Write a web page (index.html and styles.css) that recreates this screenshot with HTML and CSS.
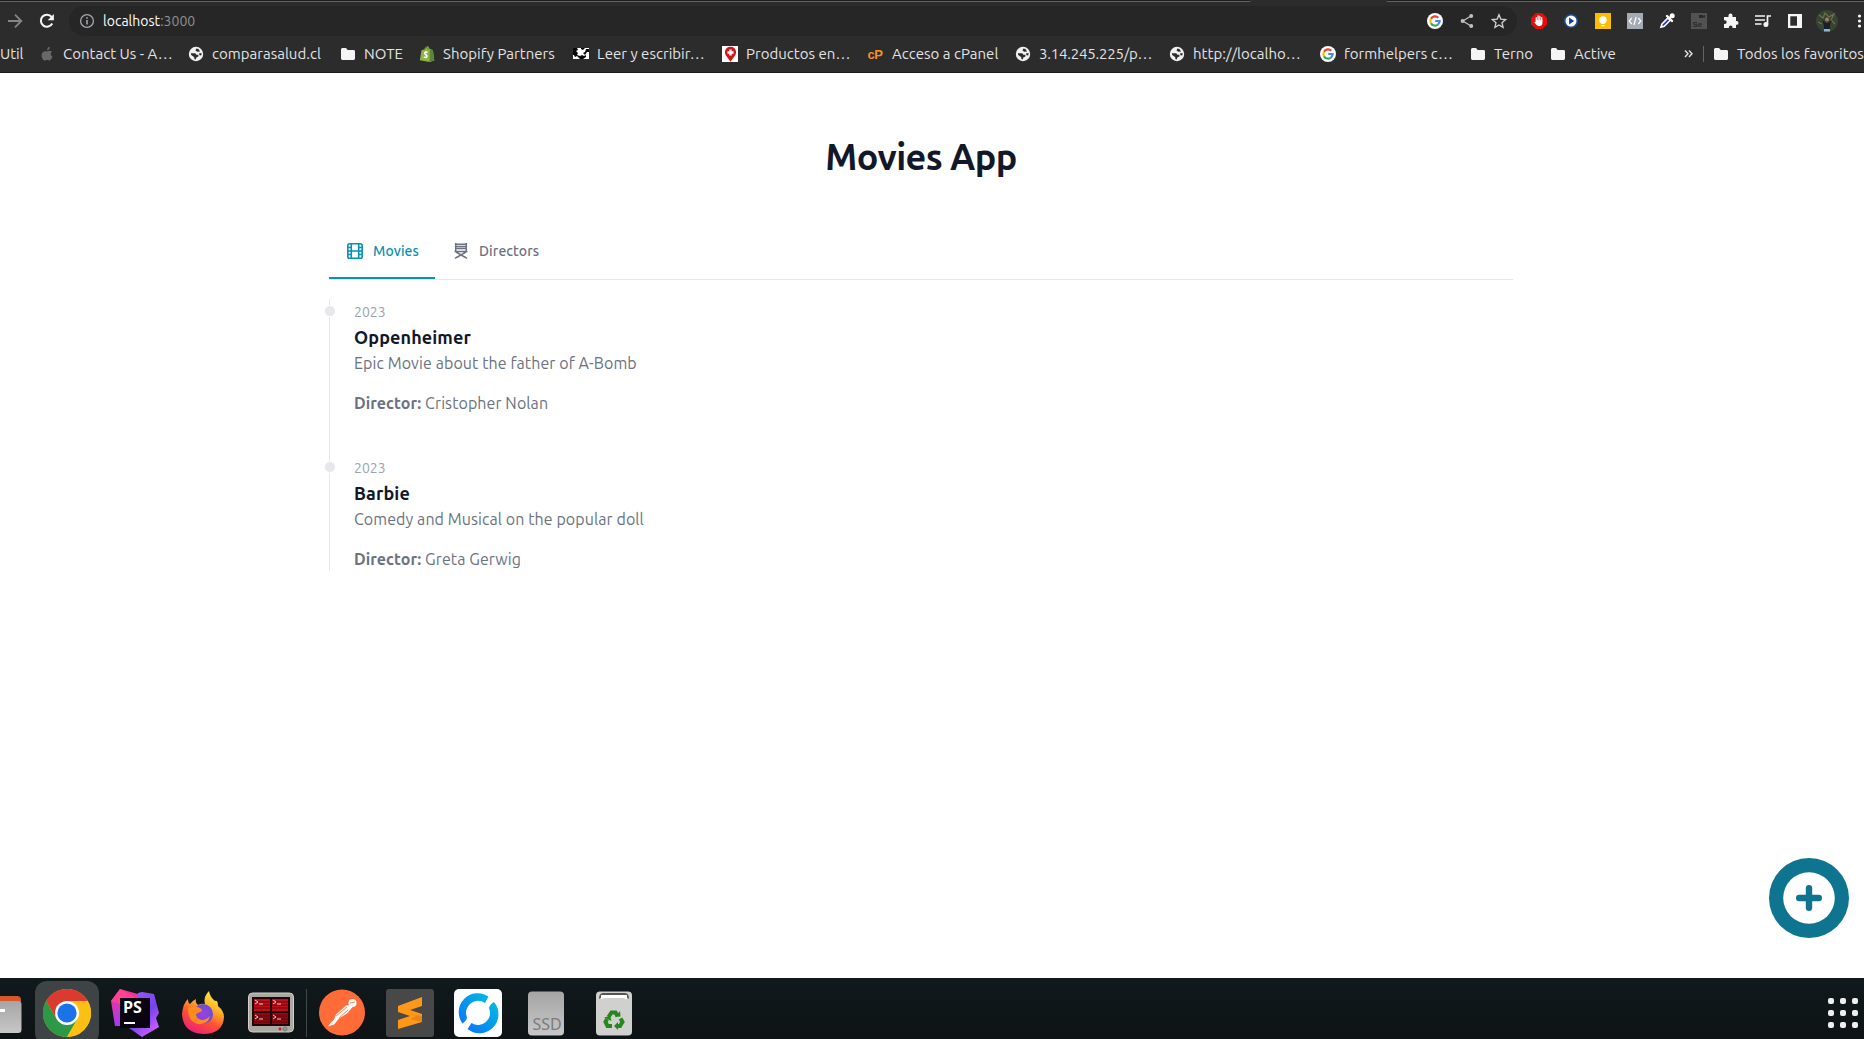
FILE: index.html
```html
<!DOCTYPE html>
<html lang="es">
<head>
<meta charset="utf-8">
<title>Movies App</title>
<link rel="stylesheet" href="styles.css">
</head>
<body>
<svg class="defs" aria-hidden="true">
  <defs>
    <symbol id="folder" viewBox="0 0 16 16"><path d="M1 3.500Q1 2 2.400 2H6l1.700 2h5.800Q15 4 15 5.400v7.200q0 1.400-1.400 1.400H2.400Q1 14 1 12.600z" fill="#f5f5f5"/></symbol>
    <symbol id="globe" viewBox="0 0 16 16"><circle cx="8" cy="8" r="7.200" fill="#f1f1f1"/><path d="M2.800 7.300h4.400l1.200 1.500h2v1.800l-2.100.9-.5 2-1.500-.4v-1.800L3.200 9zM8.400 2.600l-.9 1.900 1.700 1.300 2.900-.3-1.700-2.600zM10.800 7.500l2.800-.5-.2 2.300-1.600.2z" fill="#2c2c2c"/></symbol>
    <symbol id="google" viewBox="0 0 16 16"><circle cx="8" cy="8" r="8" fill="#fff"/><g fill="none" stroke-width="2.200"><path d="M11.300 4.700A4.600 4.600 0 0 0 4 5.800" stroke="#ea4335"/><path d="M4 5.800a4.600 4.600 0 0 0 0 4.400" stroke="#fbbc05"/><path d="M4 10.200a4.600 4.600 0 0 0 7 1.300" stroke="#34a853"/><path d="M11 11.500A4.600 4.600 0 0 0 12.600 8H8.200" stroke="#4285f4"/></g></symbol>
  </defs>
</svg>

<header class="browser">
  <div class="tabstrip"><i class="edge edge-left"></i><i class="edge edge-right"></i></div>
  <div class="toolbar">
    <span class="slot"><svg width="16" height="16" viewBox="0 0 16 16" fill="none" stroke="#858585" stroke-width="1.800"><path d="M1 8h13M8 1.600 14.300 8 8 14.400"/></svg></span>
    <span class="slot"><svg width="16" height="16" viewBox="0 0 16 16"><path d="M13.200 10.500A6 6 0 1 1 12.600 4" fill="none" stroke="#f5f5f5" stroke-width="2.100"/><path d="M14.900 1v6.200H8.700z" fill="#f5f5f5"/></svg></span>
    <div class="omnibox">
      <svg width="16" height="16" viewBox="0 0 16 16"><circle cx="8" cy="8" r="6.400" fill="none" stroke="#a5a7aa" stroke-width="1.300"/><path d="M8 7v4.500M8 4.200v1.500" stroke="#a5a7aa" stroke-width="1.600"/></svg>
      <span class="url">localhost<span class="port">:3000</span></span>
      <span class="slot push"><svg width="16" height="16"><use href="#google"/></svg></span>
      <span class="slot"><svg width="16" height="16" viewBox="0 0 16 16"><path d="M12 3 3.800 8l8.200 5" fill="none" stroke="#bfbfbf" stroke-width="1.300"/><g fill="#bfbfbf"><circle cx="12.200" cy="3" r="2"/><circle cx="3.600" cy="8" r="2"/><circle cx="12.200" cy="13" r="2"/></g></svg></span>
      <span class="slot"><svg width="16" height="16" viewBox="0 0 16 16"><path d="m8 1.700 1.800 4.400 4.800.4-3.600 3.200 1.100 4.600L8 11.900l-4.100 2.400L5 9.700 1.400 6.500l4.800-.4z" fill="none" stroke="#d0d0d0" stroke-width="1.300"/></svg></span>
    </div>
    <span class="slot"><svg width="16" height="16" viewBox="0 0 16 16"><path d="M4.700 0h6.600L16 4.700v6.600L11.300 16H4.700L0 11.300V4.700z" fill="#e40d0d"/><path d="M5.300 8V4.600M7.100 7.500V3M8.900 7.500V3.300M10.700 8V4.600" stroke="#fff" stroke-width="1.300" stroke-linecap="round"/><path d="M4.700 7.200h6.700V10q-.3 3.300-3.300 3.300Q6 13.300 3.300 9.300q.4-1 1.400-.2z" fill="#fff"/></svg></span>
    <span class="slot"><svg width="16" height="16" viewBox="0 0 16 16"><circle cx="8" cy="8" r="6.300" fill="#fff" stroke="#174e96" stroke-width="1.600"/><path d="m6.100 4.500 5 3.500-5 3.500z" fill="#123f80"/></svg></span>
    <span class="slot"><svg width="16" height="16" viewBox="0 0 16 16"><path d="M0 0h16v16H0z" fill="#fbbc04"/><circle cx="8" cy="7" r="3.700" fill="#fff"/><path d="M6.200 9h3.600v2H6.200zM6.200 12h3.600v1.200H6.200z" fill="#fff"/></svg></span>
    <span class="slot"><svg width="16" height="16" viewBox="0 0 16 16"><path d="M0 0h16v16H0z" fill="#a4abb5"/><path d="M4.700 5 2.200 8l2.500 3M11.300 5l2.500 3-2.500 3M9.200 4 6.900 12" fill="none" stroke="#fff" stroke-width="1.200"/></svg></span>
    <span class="slot"><svg width="16" height="16" viewBox="0 0 16 16"><path d="m2 14 1-3 6-6 2.200 2.200-6 6z" fill="#1d2fd0" stroke="#fff" stroke-width="1.600"/><path d="m8 3 5 5M10.300 5.500l3-3" stroke="#fff" stroke-width="2.400" stroke-linecap="round"/><circle cx="13.200" cy="2.800" r="2.500" fill="#fff"/></svg></span>
    <span class="slot"><svg width="16" height="16" viewBox="0 0 16 16"><path d="M0 0h16v16H0z" fill="#525252"/><path d="M8 2h4v1l2-1v3l-2-1v1H8z" fill="#292929"/><text x="1.400" y="13.500" class="se">Se</text></svg></span>
    <span class="slot"><svg width="16" height="16" viewBox="0 0 16 16"><path d="M1 4h4.500V2.500a2 2 0 0 1 4 0V4H13v4h.6a1.900 1.900 0 0 1 0 3.800H13V15H9.500v-.7a1.800 1.800 0 0 0-3.600 0v.7H1v-4h.8a1.900 1.900 0 0 0 0-3.800H1z" fill="#f5f5f5"/></svg></span>
    <span class="slot"><svg width="16" height="16" viewBox="0 0 16 16"><path d="M0 3h10M0 7h10M0 11h6.500M12.500 11V3H16" fill="none" stroke="#f5f5f5" stroke-width="1.700"/><circle cx="10.900" cy="11.400" r="2.500" fill="#f5f5f5"/></svg></span>
    <span class="slot"><svg width="16" height="16" viewBox="0 0 16 16"><path d="M1 1h14v14H1z" fill="#f5f5f5"/><path d="M3.300 3.300H10v9.400H3.300z" fill="#2c2c2c"/></svg></span>
    <span class="slot"><svg width="22" height="22" viewBox="0 0 22 22"><circle cx="11" cy="11" r="11" fill="#37442f"/><path d="m3 5 4 3 2-5 4 4 5-3-3 6 4 4M2 12l4 2" fill="none" stroke="#697253" stroke-width="1.200"/><circle cx="11" cy="9.500" r="2" fill="#a27c60"/><path d="m6 10 4 3h2l4-3-2 5v4H8v-4z" fill="#18202a"/><path d="M8 19h6v2.500H8z" fill="#8bb6d2"/></svg></span>
    <span class="slot"><svg width="16" height="16" viewBox="0 0 16 16" fill="#f5f5f5"><circle cx="8.500" cy="3" r="1.600"/><circle cx="8.500" cy="8" r="1.600"/><circle cx="8.500" cy="13" r="1.600"/></svg></span>
  </div>
  <nav class="bookmarks">
    <span class="bm"><span class="label util">Util</span></span>
    <span class="bm"><svg width="16" height="16" viewBox="0 0 16 16"><path d="M8.100 4.400C8 2.400 9.300 1 10.900.8c.1 2-1.100 3.400-2.800 3.600zM13 5.700q-2.900 2.200.5 5.100-1.200 3.600-2.900 3.700c-1 0-1.400-.6-2.500-.6s-1.600.6-2.500.6C3.900 14.500 2.400 11.300 2.600 9c.2-3.100 2.700-4.600 5.500-3.500 1.900-.9 3.600-.9 4.900.2z" fill="#686868"/></svg><span class="label">Contact Us - A…</span></span>
    <span class="bm"><svg width="16" height="16"><use href="#globe"/></svg><span class="label">comparasalud.cl</span></span>
    <span class="bm"><svg width="16" height="16"><use href="#folder"/></svg><span class="label">NOTE</span></span>
    <span class="bm"><svg width="16" height="16" viewBox="0 0 16 16"><path d="m2.500 4.300 3-1Q6.300.7 8.300.3q1.500-.2 2 2.200l1.600.8 2 1 1.400 10.200L10.500 16 .8 14.300z" fill="#8db543"/><path d="m10.800 3 3.100 1.300 1.400 10.200-4.800 1.500z" fill="#5a8737"/><path d="M5 4.200Q6.400 1.100 8 1.300q1 .2 1 2.500" fill="none" stroke="#5a8737"/><path d="M8.600 6.300Q5.900 5.500 5.800 7.200q0 1 1.300 1.700 1.300.9.400 2.200-1 .9-2.700-.2" fill="none" stroke="#fff" stroke-width="1.700"/></svg><span class="label">Shopify Partners</span></span>
    <span class="bm"><svg width="16" height="16" viewBox="0 0 16 16"><path d="M0 2h16v11H0z" fill="#fff"/><path d="M0 2h4l1 2-2 1 2 2-1 2 3 1 2-1 2 1 2-1v2l-3 2H7L4 10 2 11 1 9H0zM8 2h4l-2 2-2-1zM13 3h3v3h-2l-2 3-2-2 2-1z" fill="#080808"/></svg><span class="label">Leer y escribir…</span></span>
    <span class="bm"><svg width="16" height="16" viewBox="0 0 16 16"><path d="M0 0h16v16H0z" fill="#fff"/><path d="M8.500 15.800 4 9.600a5.600 5.600 0 1 1 9 0z" fill="#d41219"/><path d="M8.500 3.500v6M5.500 6.500h6" stroke="#fff" stroke-width="2.400"/></svg><span class="label">Productos en…</span></span>
    <span class="bm"><svg width="16" height="16" viewBox="0 0 16 16"><text x="-0.500" y="12.500" class="cp">cP</text></svg><span class="label">Acceso a cPanel</span></span>
    <span class="bm"><svg width="16" height="16"><use href="#globe"/></svg><span class="label ip">3.14.245.225/p…</span></span>
    <span class="bm"><svg width="16" height="16"><use href="#globe"/></svg><span class="label">http://localho…</span></span>
    <span class="bm"><svg width="16" height="16"><use href="#google"/></svg><span class="label">formhelpers c…</span></span>
    <span class="bm"><svg width="16" height="16"><use href="#folder"/></svg><span class="label">Terno</span></span>
    <span class="bm"><svg width="16" height="16"><use href="#folder"/></svg><span class="label">Active</span></span>
    <span class="bm more"><svg width="10" height="10" viewBox="0 0 10 10"><path d="m1 1.500 3 3.200-3 3.200M5 1.500l3 3.200-3 3.200" fill="none" stroke="#e5e5e5" stroke-width="1.400"/></svg></span>
    <span class="bm"><svg width="16" height="16"><use href="#folder"/></svg><span class="label">Todos los favoritos</span></span>
  </nav>
</header>

<main class="page">
  <h1 class="title">Movies App</h1>
  <div class="tabs">
    <a class="tab tab-on"><svg width="18" height="18" viewBox="0 0 18 18" fill="none" stroke="currentColor" stroke-width="1.600"><rect x="1.800" y="1.800" width="14.400" height="14.400" rx="1.800"/><path d="M5.300 2v14M12.700 2v14M5.300 9h7.400M2 5.500h3M2 9h3M2 12.500h3M13 5.500h3M13 9h3M13 12.500h3"/></svg>Movies</a>
    <a class="tab"><svg width="18" height="18" viewBox="0 0 18 18" fill="none" stroke="currentColor" stroke-width="1.500"><path d="M3.700 1v8M14.300 1v8M3 2.300h12M3 4.500h12M3 6.500h12M2.500 9.400h13M4 10l9.500 5.500M14 10l-9.500 5.500M3 16.500l2-1.500M15 16.500 13 15"/></svg>Directors</a>
  </div>
  <ol class="timeline">
    <li class="movie">
      <i class="dot"></i>
      <time class="year">2023</time>
      <h3 class="name">Oppenheimer</h3>
      <p class="text">Epic Movie about the father of A-Bomb</p>
      <p class="text credit"><b>Director:</b> Cristopher Nolan</p>
    </li>
    <li class="movie">
      <i class="dot"></i>
      <time class="year">2023</time>
      <h3 class="name">Barbie</h3>
      <p class="text">Comedy and Musical on the popular doll</p>
      <p class="text credit"><b>Director:</b> Greta Gerwig</p>
    </li>
  </ol>
  <button class="add" aria-label="Add"><svg width="52" height="52" viewBox="0 0 52 52"><circle cx="26" cy="26" r="25.800" fill="#fff"/><path d="M26 16.200v19.600M16.200 26h19.600" stroke="#0e7490" stroke-width="6.400" stroke-linecap="round"/></svg></button>
</main>

<footer class="dock">
  <span class="app"><svg width="48" height="48" viewBox="0 0 48 48"><rect x="2" y="7" width="44" height="30" rx="4" fill="#d9572b"/><rect x="2" y="12" width="44.500" height="32" rx="3.500" fill="url(#metal)"/><path d="M13 21.500h17" stroke="#fff" stroke-width="3"/></svg></span>
  <span class="app app-on"><svg width="48" height="48" viewBox="0 0 48 48"><circle cx="24" cy="24" r="24" fill="#fbc013"/><path d="M24 24 13.600 30 3.200 12A24 24 0 0 0 24 48L34.400 30z" fill="#2a9a48"/><path d="M3.200 12a24 24 0 0 1 41.600 0H24L13.600 30z" fill="#db3a2e"/><path d="M24 12h20.800A24 24 0 0 1 24 48l10.400-18z" fill="#fbc013"/><circle cx="24" cy="24" r="12" fill="#fff"/><circle cx="24" cy="24" r="9.600" fill="#1a73e8"/></svg></span>
  <span class="app"><svg width="48" height="48" viewBox="0 0 48 48"><defs><linearGradient id="pk" x2="0" y2="1"><stop stop-color="#ff318c"/><stop offset="1" stop-color="#a33cf1"/></linearGradient><linearGradient id="pu" x2=".6" y2="1"><stop stop-color="#a05cff"/><stop offset=".6" stop-color="#7444e8"/><stop offset="1" stop-color="#c75cff"/></linearGradient></defs><path d="M27 4 31 3l12 2 5 19-3 5 3 9-17 10-13-9z" fill="url(#pu)"/><path d="m0 12 9-12 18 5-1 32H4z" fill="url(#pk)"/><path d="M9 0 0 12l9 3L24 8z" fill="#ff4294"/><path d="M9 9h30v30H9z" fill="#090410"/><text x="12" y="24" class="ps">PS</text><path d="M13 34h11" stroke="#fff" stroke-width="2"/></svg></span>
  <span class="app"><svg width="48" height="48" viewBox="0 0 48 48"><defs><linearGradient id="ff" x1=".8" y1="0" x2=".3" y2="1"><stop stop-color="#fff04a"/><stop offset=".35" stop-color="#ffb326"/><stop offset=".65" stop-color="#ff5035"/><stop offset="1" stop-color="#e8207a"/></linearGradient><radialGradient id="fp"><stop stop-color="#a13ee4"/><stop offset="1" stop-color="#6451d2"/></radialGradient></defs><path d="M9 10q0 4 2 5 2-3 6-5-1 4 2 6 4-2 7-1Q24 8 30 2q1 6 6 10 3-1 3 5 6 5 6 11-1 17-21 17Q4 44 3 25q1-11 6-15z" fill="url(#ff)"/><circle cx="24" cy="25" r="10" fill="url(#fp)"/><path d="M9 18q5-3 9 0 5 1 5 4l-6 3q0 5 6 6 4 0 8-4-2 9-12 8Q8 32 9 18z" fill="#ff8a20"/></svg></span>
  <span class="app"><svg width="48" height="48" viewBox="0 0 48 48"><rect x="1.500" y="4" width="45" height="39" rx="4" fill="#aaa9a2" stroke="#d0d0c9"/><path d="M5 8h38v29H5z" fill="#1f0608"/><path d="M7 10h16v12H7zM25 10h16v12H25z" fill="#c50d18"/><path d="M7 24h16v11H7zM25 24h16v11H25z" fill="#8f0710"/><path d="M7 13h34M7 16h34M7 19h34M7 27h34M7 30h34M7 33h34" stroke="#42070b" stroke-width=".7"/><path d="m8 11 3 2-3 2m4 0h4M26 11l3 2-3 2m4 0h4M8 26l3 2-3 2m4 0h4M26 26l3 2-3 2m4 0h4" fill="none" stroke="#eacbcb"/><circle cx="33" cy="40" r="1.400" fill="#e11"/><circle cx="38" cy="40" r="2" fill="#999" stroke="#777"/></svg></span>
  <i class="rule"></i>
  <span class="app"><svg width="48" height="48" viewBox="0 0 48 48"><circle cx="24" cy="23.500" r="23" fill="#ff6c37"/><circle cx="34.500" cy="14" r="4" fill="#fff"/><path d="m32 16-4 .5-10 9-2 5-4 4-2 3 6-2 5-6 8-5 6-7z" fill="#fff"/><path d="m18 27 11-9M21 29l9-8M32 14l5-1" stroke="#ff6c37" stroke-width=".8"/></svg></span>
  <span class="app"><svg width="48" height="48" viewBox="0 0 48 48"><rect width="48" height="48" rx="3" fill="#484848"/><path d="m12 17 24-9v9l-12 4 12 4v8l-24 7v-9l12-4-12-4z" fill="#ff9819"/><path d="m24 30 6-3-6-2 12 2v6z" fill="#e98515"/></svg></span>
  <span class="app"><svg width="48" height="48" viewBox="0 0 48 48"><defs><linearGradient id="rk" y1="1" x2="1" y2="0"><stop stop-color="#0a6cff"/><stop offset="1" stop-color="#00c6dc"/></linearGradient></defs><rect width="48" height="48" rx="5" fill="#fff"/><path d="M8.500 34.500A19 19 0 0 1 34.500 7.500L31 14A12 12 0 0 0 13 28.500q-.3 3-4.500 6zM40 13a19 19 0 0 1-26.500 27l4-6A12 12 0 0 0 35 19q1-4 5-6z" fill="url(#rk)"/></svg></span>
  <span class="app"><svg width="48" height="48" viewBox="0 0 48 48"><defs><linearGradient id="metal" x2="0" y2="1"><stop stop-color="#a5a5a5"/><stop offset="1" stop-color="#c7c7c7"/></linearGradient></defs><rect x="6" y="2.500" width="36" height="44" rx="4" fill="url(#metal)"/><text x="10.500" y="41" class="ssd">SSD</text></svg></span>
  <span class="app"><svg width="48" height="48" viewBox="0 0 48 48"><rect x="6" y="2.500" width="36" height="44" rx="4" fill="#d0d0cf"/><path d="M9 10q0-6 4-6h22q4 0 4 6l-3-2H12z" fill="#555"/><path d="M11 10V6h26v4l-4-1H15z" fill="#fff"/><g fill="none" stroke="#25871d" stroke-width="4"><path d="m18.500 28 3-4.500h4l2 3.500M17 30l-1.500 3 2 4H22M26 37h4l2.500-4-2-3.500"/></g><path d="m25 28 5.500-.5L30 22zM14 28.500l6-1.500 1.500 5zM28 33l-4 4 4 4z" fill="#25871d"/></svg></span>
  <span class="launcher"><i></i><i></i><i></i><i></i><i></i><i></i><i></i><i></i><i></i></span>
</footer>
</body>
</html>
```
FILE: styles.css
```css
* { box-sizing: border-box; }
body { margin: 0; height: 1039px; display: flex; flex-direction: column; overflow: hidden; background: #fff; font-family: Ubuntu, "Noto Sans", sans-serif; }
svg { display: block; flex: none; }
.defs { position: absolute; width: 0; height: 0; }

.browser { height: 73px; flex: none; background: #2c2c2c; border-bottom: 1px solid #191919; }
.tabstrip { height: 2px; display: flex; justify-content: space-between; }
.edge { background: #1d1d1d; border-bottom: 1px solid #626262; }
.edge-left { width: 1251px; border-bottom-right-radius: 3px; }
.edge-right { width: 478px; border-bottom-left-radius: 3px; }
.toolbar { height: 38px; display: flex; align-items: center; margin-left: -1px; }
.slot { width: 32px; height: 30px; flex: none; display: flex; align-items: center; justify-content: center; }
.omnibox { width: 1448px; height: 30px; margin: 0 6px; flex: none; display: flex; align-items: center; padding: 0 2px 0 10px; border-radius: 15px; background: #262626; }
.url { margin-left: 8px; color: #fff; font-size: 14px; letter-spacing: 0.02px; }
.port { color: #8f8f8f; }
.push { margin-left: auto; }
.se { font: bold 8px "Liberation Sans", sans-serif; fill: #292929; }
.bookmarks { height: 28px; display: grid; align-items: center; grid-template-columns: 39px 149px 152px 79px 154px 149px 146px 147px 154px 151px 150px 80px 134px 29px 1fr; color: #e3e3e3; font-size: 15px; white-space: nowrap; }
.bm { display: flex; align-items: center; gap: 8px; }
.label { height: 16px; line-height: 15px; letter-spacing: 0.02px; }
.util { letter-spacing: -0.1px; }
.ip { letter-spacing: -0.2px; }
.cp { font: bold 13px "Liberation Sans", sans-serif; fill: #f6902a; letter-spacing: -0.4px; }
.more { height: 16px; border-right: 1px solid #656565; width: 20px; }

.page { height: 905px; flex: none; padding: 62px 351px 0 329px; position: relative; }
.title { margin: 0; height: 44px; line-height: 44px; font-size: 36px; font-weight: 700; color: #111827; text-align: center; letter-spacing: -0.6px; }
.tabs { margin-top: 46px; height: 55px; display: flex; border-bottom: 1px solid #e5e7eb; }
.tab { display: flex; align-items: flex-start; gap: 9px; padding: 17px 16px 0 17px; height: 54px; color: #6b7280; font-size: 14px; line-height: 18px; font-weight: 500; letter-spacing: 0.1px; }
.tab-on { width: 106px; color: #0891b2; border-bottom: 2px solid #0891b2; }
.timeline { margin: 19px 0 0; padding: 0 0 0 24px; list-style: none; border-left: 1px solid #e5e7eb; }
.movie { position: relative; height: 116px; margin-bottom: 40px; display: flex; flex-direction: column; }
.movie:last-child { margin-bottom: 0; }
.dot { position: absolute; left: -30px; top: 6px; width: 12px; height: 12px; border-radius: 50%; border: 1px solid #fff; background: #e5e7eb; }
.year { height: 24px; line-height: 26px; color: #9ca3af; font-size: 14px; }
.name { margin: 0; height: 28px; line-height: 28px; font-size: 18px; font-weight: 600; color: #111827; letter-spacing: 0.1px; }
.text { margin: 0; height: 24px; line-height: 24px; font-size: 16px; color: #6b7280; white-space: nowrap; letter-spacing: 0.08px; }
.credit { margin-top: 16px; }
.add { position: absolute; right: 15px; bottom: 40px; width: 80px; height: 80px; padding: 14px; border: 0; border-radius: 50%; background: #0e7490; }

.dock { height: 61px; flex: none; display: flex; align-items: flex-start; padding-top: 3px; background: linear-gradient(#10191c, #0e1315); }
.app { width: 64px; height: 64px; flex: none; margin: 0 2px; padding: 8px; border-radius: 12px; }
.app:first-child { margin-left: -33px; }
.app-on { background: #3e4345; }
.rule { width: 1px; height: 48px; margin: 8px 1px 0; background: #424748; flex: none; }
.ps { font: bold 16px "Open Sans", sans-serif; fill: #fff; }
.ssd { font: 16px "Noto Sans", sans-serif; fill: #7c7c7c; }
.launcher { margin: 17px 6px 0 auto; display: grid; grid-template-columns: repeat(3, 6px); gap: 6px; }
.launcher i { height: 6px; border-radius: 2px; background: #eee; }
```
